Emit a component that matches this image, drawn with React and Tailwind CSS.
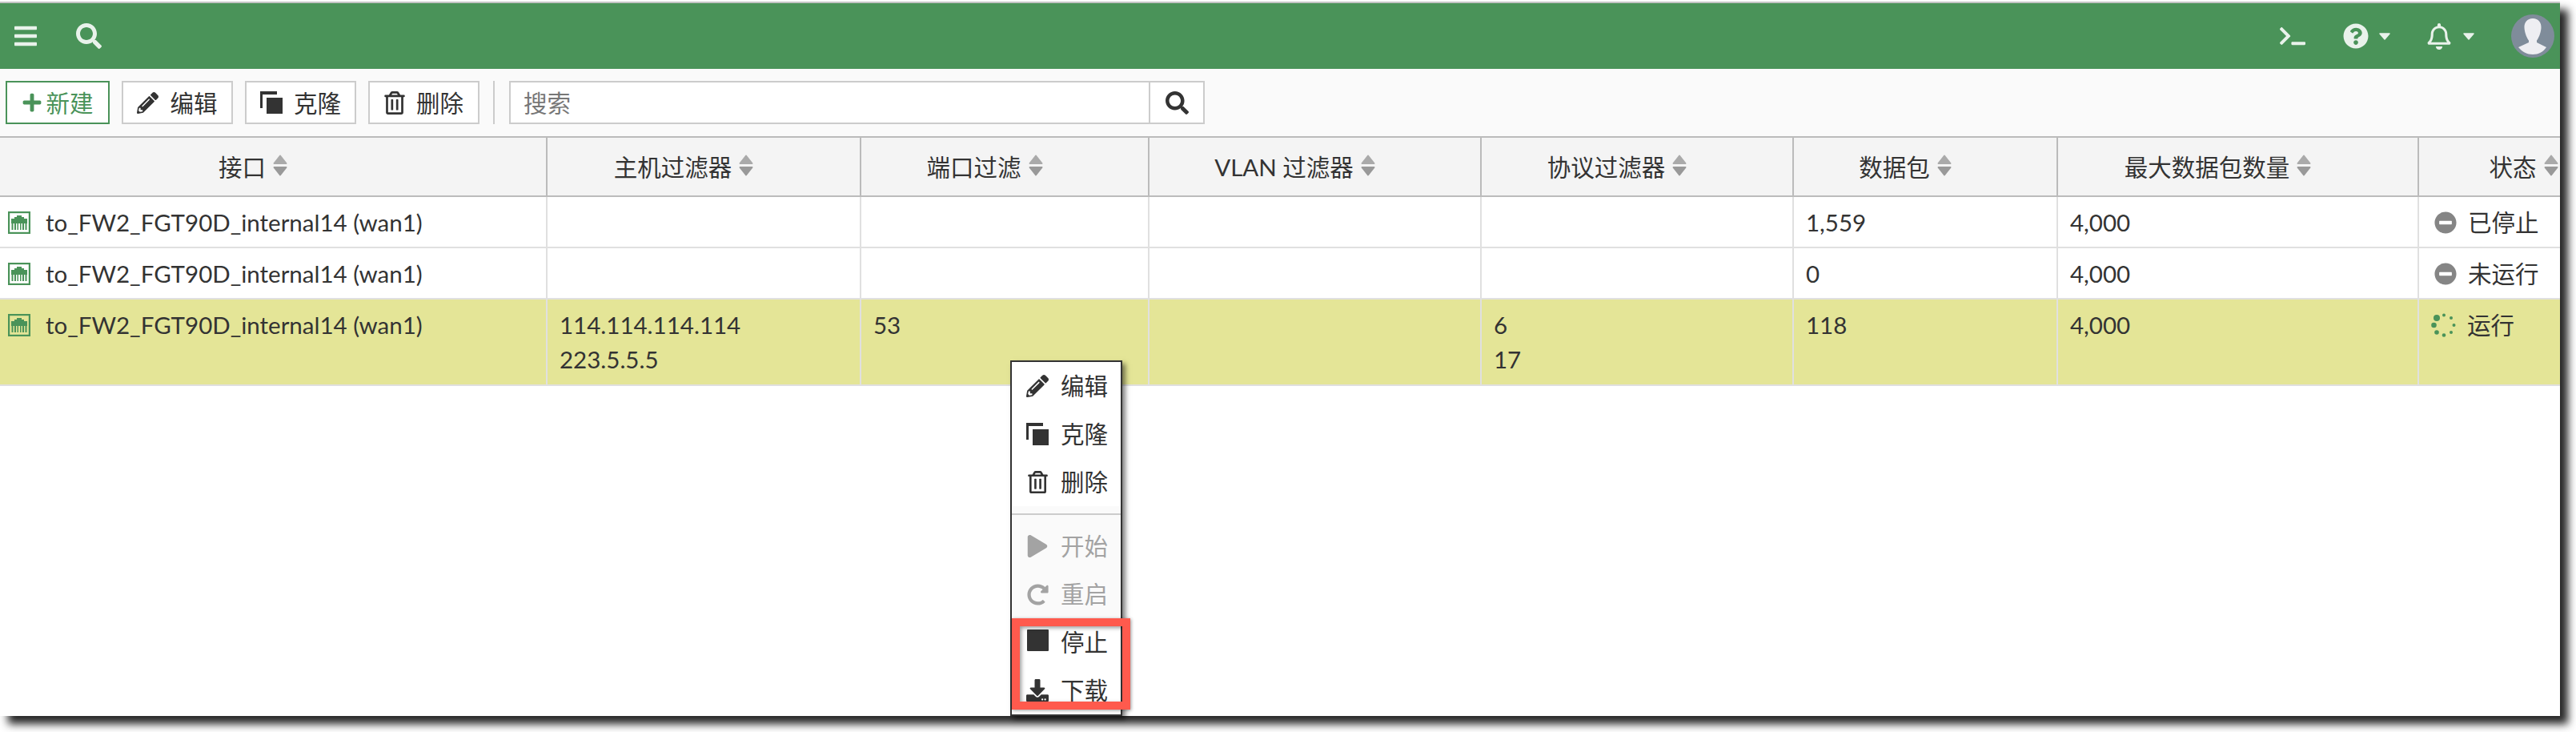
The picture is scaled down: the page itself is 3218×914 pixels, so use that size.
import React from 'react';
import { FaBars, FaSearch, FaTerminal, FaQuestionCircle, FaRegBell, FaPlus, FaPencilAlt, FaRegTrashAlt, FaPlay, FaRedoAlt, FaDownload, FaMinusCircle } from 'react-icons/fa';

const columns = [
    { title: '接口', width: 'w-[684px]' },
    { title: '主机过滤器', width: 'w-[392px]' },
    { title: '端口过滤', width: 'w-[360px]' },
    { title: 'VLAN 过滤器', width: 'w-[415px]' },
    { title: '协议过滤器', width: 'w-[390px]' },
    { title: '数据包', width: 'w-[330px]' },
    { title: '最大数据包数量', width: 'w-[451px]' },
    { title: '状态', width: 'w-[313px]' },
];

const rows = [
    { host: [], port: [], proto: [], packets: '1,559', max: '4,000', status: '已停止' },
    { host: [], port: [], proto: [], packets: '0', max: '4,000', status: '未运行' },
    { host: ['114.114.114.114', '223.5.5.5'], port: ['53'], proto: ['6', '17'], packets: '118', max: '4,000', status: '运行', active: true },
];

const CloneIcon = ({ className }) => (
    <svg viewBox="0 0 28 28" className={className} fill="currentColor">
        <path d="M0 0H21V4H3V21H0Z" />
        <rect x="8" y="8" width="20" height="20" />
    </svg>
);

const SortIcon = () => (
    <svg viewBox="0 0 18 27" className="w-[18px] h-[27px] shrink-0 -mt-1">
        <path d="M9 1.5L16.5 11H1.5Z" fill="#aaaaaa" stroke="#aaaaaa" strokeWidth="2" strokeLinejoin="round" />
        <path d="M1.5 16H16.5L9 25.5Z" fill="#999999" stroke="#999999" strokeWidth="2" strokeLinejoin="round" />
    </svg>
);

const Caret = () => (
    <svg viewBox="0 0 14 9" className="w-[14px] h-[9px] shrink-0" fill="currentColor">
        <path d="M1 1H13L7 8Z" stroke="currentColor" strokeWidth="1.5" strokeLinejoin="round" />
    </svg>
);

const PortIcon = () => (
    <svg viewBox="0 0 28 28" className="w-[28px] h-[28px] shrink-0" fill="#4a9359">
        <rect x="1" y="1" width="26" height="26" fill="none" stroke="#4a9359" strokeWidth="2.4" />
        <path d="M4 9H8V7H11V5H17V7H20V9H24V15H4Z" />
        <path d="M4.5 15H6.5V23H4.5ZM8 15H10V23H8ZM11.5 15H13V23H11.5ZM15 15H16.5V23H15ZM18 15H20V23H18ZM21.500 15H23.500V23H21.500Z" />
    </svg>
);

const Spinner = () => (
    <svg viewBox="0 0 32 32" className="w-[32px] h-[32px] shrink-0" fill="#4a9359">
        <circle cx="7" cy="7" r="4" />
        <circle cx="3.500" cy="16" r="3.300" />
        <circle cx="7" cy="25" r="2.800" />
        <circle cx="16" cy="28.500" r="2.300" />
        <circle cx="25" cy="25" r="2" />
        <circle cx="28.500" cy="16" r="2" />
        <circle cx="25" cy="7" r="2" />
        <circle cx="16" cy="3.500" r="2" />
    </svg>
);

const Avatar = () => (
    <svg viewBox="0 0 54 54" className="w-[54px] h-[54px] shrink-0">
        <circle cx="27" cy="27" r="27" fill="#7f8c9a" />
        <path d="M27 5C34 5 38 10 37.500 17C37 24 34 30 32 32.500V35L44 41C40 47 34 50 27 50C20 50 14 47 9 41L22 35V32.500C20 30 17 24 16.500 17C16 10 20 5 27 5Z" fill="#eeeef2" />
    </svg>
);

const ToolButton = ({ icon, label }) => (
    <button className="flex items-center justify-center gap-[14px] w-[139px] h-[54px] bg-white border-2 border-[#cccccc] text-[#333333]">
        {icon}
        <span>{label}</span>
    </button>
);

const MenuItem = ({ icon, label, disabled }) => (
    <div className={`flex items-center h-[60px] pl-[16px] ${disabled ? 'bg-[#fafafa] text-[#a3a3a3]' : 'bg-white text-[#333333]'}`}>
        <span className="flex items-center justify-center w-[32px]">{icon}</span>
        <span className="ml-[13px] -mt-[2px]">{label}</span>
    </div>
);

const App = () => {
    return (
        <div className="relative w-[3218px] h-[914px] overflow-hidden bg-white pt-[2px] text-[29.5px] leading-[43px] text-[#333333] font-['Lato','Noto_Sans_CJK_SC',sans-serif]">
            <div className="flex flex-col w-[3198px] h-[892px] bg-white border-t-2 border-[#c4c4c4] shadow-[10px_10px_10px_rgba(0,0,0,0.85)]">
                {/* top bar */}
                <div className="flex items-center h-[82px] shrink-0 bg-[#4a9359] text-[#e9f2eb]">
                    <FaBars className="w-[28px] h-[32px] ml-[18px]" />
                    <FaSearch className="w-[32px] h-[32px] ml-[49px]" />
                    <div className="flex items-center ml-auto pr-[7px]">
                        <FaTerminal className="w-[32px] h-[26px]" />
                        <FaQuestionCircle className="w-[32px] h-[32px] ml-[47px]" />
                        <span className="ml-[13px]"><Caret /></span>
                        <FaRegBell className="w-[30px] h-[33px] ml-[46px]" />
                        <span className="ml-[15px]"><Caret /></span>
                        <div className="ml-[46px]"><Avatar /></div>
                    </div>
                </div>

                {/* toolbar */}
                <div className="flex items-center h-[84px] shrink-0 pl-[7px] bg-[#fafafa]">
                    <button className="flex items-center justify-center gap-[4px] w-[130px] h-[54px] bg-white border-2 border-[#4a9359] text-[#4a9359]">
                        <FaPlus className="w-[26px] h-[26px]" />
                        <span>新建</span>
                    </button>
                    <div className="flex items-center gap-[15px] ml-[15px]">
                        <ToolButton icon={<FaPencilAlt className="w-[27px] h-[27px]" />} label="编辑" />
                        <ToolButton icon={<CloneIcon className="w-[28px] h-[28px]" />} label="克隆" />
                        <ToolButton icon={<FaRegTrashAlt className="w-[26px] h-[29px]" />} label="删除" />
                    </div>
                    <div className="w-[2px] h-[54px] bg-[#cccccc] ml-[17px]"></div>
                    <div className="flex items-stretch w-[869px] h-[54px] ml-[18px] bg-white border-2 border-[#cccccc]">
                        <span className="flex items-center flex-1 pl-[16px] text-[#777777]">搜索</span>
                        <span className="flex items-center justify-center w-[68px] border-l-2 border-[#cccccc]">
                            <FaSearch className="w-[29px] h-[29px]" />
                        </span>
                    </div>
                </div>

                {/* table, the last column runs past the window edge */}
                <div className="flex-1 overflow-hidden">
                    <table className="table-fixed w-[3335px] border-separate border-spacing-0">
                        <thead>
                            <tr>
                                {columns.map((col) => (
                                    <th key={col.title} className={`${col.width} h-[76px] p-0 pr-[50px] font-normal bg-[#f4f4f4] border-t-2 border-b-2 border-r-2 border-[#bbbbbb]`}>
                                        <div className="flex items-center justify-center gap-[9px]">
                                            <span>{col.title}</span>
                                            <SortIcon />
                                        </div>
                                    </th>
                                ))}
                            </tr>
                        </thead>
                        <tbody>
                            {rows.map((row, i) => {
                                const cell = `p-0 pt-[10px] pl-[15px] align-top border-b-2 border-r-2 border-[#e0e0e0] ${row.active ? 'bg-[#e4e597] h-[108px]' : 'bg-white h-[64px]'}`;
                                return (
                                    <tr key={i}>
                                        <td className={cell + ' !pl-[10px]'}>
                                            <div className="flex items-center gap-[19px]">
                                                <PortIcon />
                                                <span>to_FW2_FGT90D_internal14 (wan1)</span>
                                            </div>
                                        </td>
                                        <td className={cell}>{row.host.map((h) => <div key={h}>{h}</div>)}</td>
                                        <td className={cell}>{row.port.map((p) => <div key={p}>{p}</div>)}</td>
                                        <td className={cell}></td>
                                        <td className={cell}>{row.proto.map((p) => <div key={p}>{p}</div>)}</td>
                                        <td className={cell}>{row.packets}</td>
                                        <td className={cell}>{row.max}</td>
                                        <td className={cell}>
                                            <div className="flex items-center">
                                                {row.active ? <Spinner /> : <FaMinusCircle className="w-[28px] h-[28px] ml-[4px] text-[#858585]" />}
                                                <span className={row.active ? 'ml-[13px]' : 'ml-[14px]'}>{row.status}</span>
                                            </div>
                                        </td>
                                    </tr>
                                );
                            })}
                        </tbody>
                    </table>
                </div>
            </div>

            {/* context menu */}
            <div className="absolute left-[1262px] top-[450px] w-[140px] bg-white border-2 border-[#333333] shadow-[4px_4px_6px_rgba(0,0,0,0.5)]">
                <MenuItem icon={<FaPencilAlt className="w-[28px] h-[28px]" />} label="编辑" />
                <MenuItem icon={<CloneIcon className="w-[28px] h-[28px]" />} label="克隆" />
                <MenuItem icon={<FaRegTrashAlt className="w-[25px] h-[28px]" />} label="删除" />
                <div className="flex items-center h-[20px] bg-[#fafafa]">
                    <div className="w-full h-[2px] bg-[#cccccc]"></div>
                </div>
                <MenuItem disabled icon={<FaPlay className="w-[26px] h-[28px]" />} label="开始" />
                <MenuItem disabled icon={<FaRedoAlt className="w-[27px] h-[27px]" />} label="重启" />
                <MenuItem icon={<span className="block w-[27px] h-[27px] -mt-[6px] rounded-[1px] bg-[#333333]"></span>} label="停止" />
                <MenuItem icon={<FaDownload className="w-[30px] h-[28px]" />} label="下载" />
            </div>

            {/* red callout drawn over the screenshot */}
            <div className="absolute left-[1264px] top-[772px] w-[148px] h-[114px] border-[10px] border-[#ff5a4d] shadow-[1px_1px_4px_rgba(0,0,0,0.4),inset_2px_2px_5px_rgba(0,0,0,0.4)]"></div>
        </div>
    );
};

export default App;
